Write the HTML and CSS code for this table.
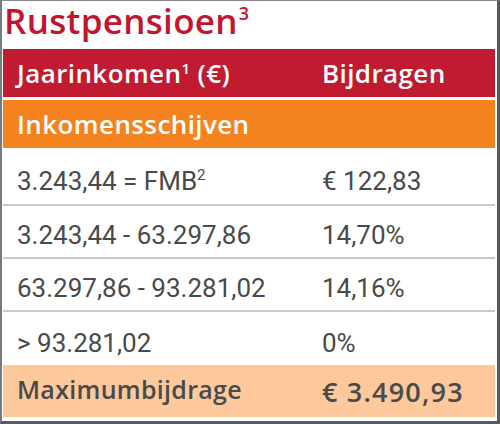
FILE: index.html
```html
<!DOCTYPE html>
<html lang="nl">
<head>
<meta charset="utf-8">
<title>Rustpensioen</title>
<link rel="stylesheet" href="styles.css">
</head>
<body>
<div class="frame">
  <h1 class="title">Rustpensioen<sup>3</sup></h1>
  <div class="table">
    <div class="row head">
      <div class="c1">Jaarinkomen<sup>1</sup> (€)</div>
      <div class="c2">Bijdragen</div>
    </div>
    <div class="row sub">
      <div class="c1">Inkomensschijven</div>
    </div>
    <div class="row body first">
      <div class="c1">3.243,44 = FMB<sup>2</sup></div>
      <div class="c2">€ 122,83</div>
    </div>
    <div class="row body">
      <div class="c1">3.243,44 - 63.297,86</div>
      <div class="c2">14,70%</div>
    </div>
    <div class="row body">
      <div class="c1">63.297,86 - 93.281,02</div>
      <div class="c2">14,16%</div>
    </div>
    <div class="row body last">
      <div class="c1">&gt; 93.281,02</div>
      <div class="c2">0%</div>
    </div>
    <div class="row total">
      <div class="c1">Maximumbijdrage</div>
      <div class="c2 amount">€ 3.490,93</div>
    </div>
  </div>
</div>
</body>
</html>
```
FILE: styles.css
```css
html, body { margin: 0; padding: 0; background: #fff; }
.frame {
  width: 500px; height: 424px; box-sizing: border-box;
  border-top: 1px solid #8a8a8a;
  border-left: 2px solid #7a7a7a;
  border-right: 3px solid #5a5a5a;
  border-bottom: 3px solid #5a5a5a;
  padding: 0 0 0 1px;
  display: flex; flex-direction: column;
}
.title {
  margin: 0 0 0 1px; height: 48px;
  font-family: "Open Sans", sans-serif; font-weight: 600;
  font-size: 35px; line-height: 40px; color: #c3152f; letter-spacing: 0.3px;
}
.title sup { font-size: 18px; vertical-align: 14px; line-height: 0; margin-left: 1px; }
.table { display: flex; flex-direction: column; width: 492px; }
.row { display: grid; grid-template-columns: 305px 1fr; align-items: center; padding-left: 14px; box-sizing: border-box; }
.head, .sub, .total { font-family: "Open Sans", sans-serif; font-weight: 600; font-size: 26px; letter-spacing: 0.4px; }
.head { background: #c01b30; color: #fff; height: 48px; }
.head sup { font-size: 15px; vertical-align: 9px; line-height: 0; }
.sub { background: #f4821f; color: #fff; height: 48px; margin-top: 3px; }
.body { height: 53px; padding-top: 6px; border-bottom: 2px solid #c9c9c9; font-family: Roboto, sans-serif; font-size: 26px; color: #4a4a4a; }
.body.first { height: 58px; padding-top: 10px; }
.body.last { border-bottom: 0; padding-top: 8px; }
.body sup { font-size: 15px; vertical-align: 10px; line-height: 0; }
.total { background: #fdc89c; height: 52px; color: #4a4a4a; font-size: 25px; letter-spacing: 0.3px; }
.total .c1 { margin-top: -4px; }
.total .amount { font-size: 27px; letter-spacing: 1.2px; }
```
